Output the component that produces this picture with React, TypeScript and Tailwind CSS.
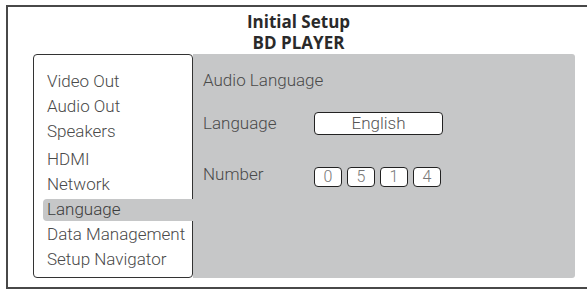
const menu = [
  'Video Out',
  'Audio Out',
  'Speakers',
  'HDMI',
  'Network',
  'Language',
  'Data Management',
  'Setup Navigator',
];

const digits = ['0', '5', '1', '4'];

export default function App() {
  return (
    <div className="w-[587px] h-[290px] overflow-hidden bg-white font-['Roboto',sans-serif]">
      <div className="ml-[6px] mt-[5px] h-[284px] w-[600px] border-l-2 border-t-2 border-b-2 border-[#484848] flex flex-col">
        <div className="pt-[4px] h-[47px] w-[581px] text-center font-['Open_Sans',sans-serif] font-bold text-[17px] leading-[21px] text-[#2a2a2a]">
          <div>Initial Setup</div>
          <div>BD PLAYER</div>
        </div>

        <div className="flex ml-[25px]">
          {/* menu */}
          <div className="w-[160px] h-[224px] border border-[#333] rounded-[4px] bg-white pt-[14px] pl-[9px]">
            {menu.map((item, i) => (
              <div
                key={item}
                className={`h-[25px] flex items-center ${i === 3 ? 'mt-[3px]' : ''}`}
              >
                {item === 'Language' ? (
                  <div className="relative z-10 -mr-[2px] flex-1 h-[22px] flex items-center pl-[4px] bg-[#c6c7c8] rounded-l-[4px] text-[17px] font-light text-[#3c3c3c]">
                    {item}
                  </div>
                ) : (
                  <span className="pl-[4px] text-[17px] font-light text-[#4a4a4a]">{item}</span>
                )}
              </div>
            ))}
          </div>

          {/* detail panel */}
          <div className="w-[382px] h-[224px] bg-[#c6c7c8] rounded-r-[3px] pt-[14px] pl-[10px] text-[17px] font-light text-[#4a4a4a]">
            <div className="h-[25px] flex items-center">Audio Language</div>

            <div className="mt-[18px] flex items-center">
              <div className="w-[111px]">Language</div>
              <div className="w-[129px] h-[23px] bg-white border-[1.5px] border-[#222] rounded-[4px] flex items-center justify-center text-[#555]">
                English
              </div>
            </div>

            <div className="mt-[30px] flex items-center">
              <div className="w-[111px] -mt-[5px]">Number</div>
              <div className="flex gap-[5px]">
                {digits.map((d, i) => (
                  <div
                    key={i}
                    className="w-[28px] h-[20px] bg-white border-[1.5px] border-[#222] rounded-[4px] flex items-center justify-center text-[16px] text-[#777]"
                  >
                    {d}
                  </div>
                ))}
              </div>
            </div>
          </div>
        </div>
      </div>
    </div>
  );
}
